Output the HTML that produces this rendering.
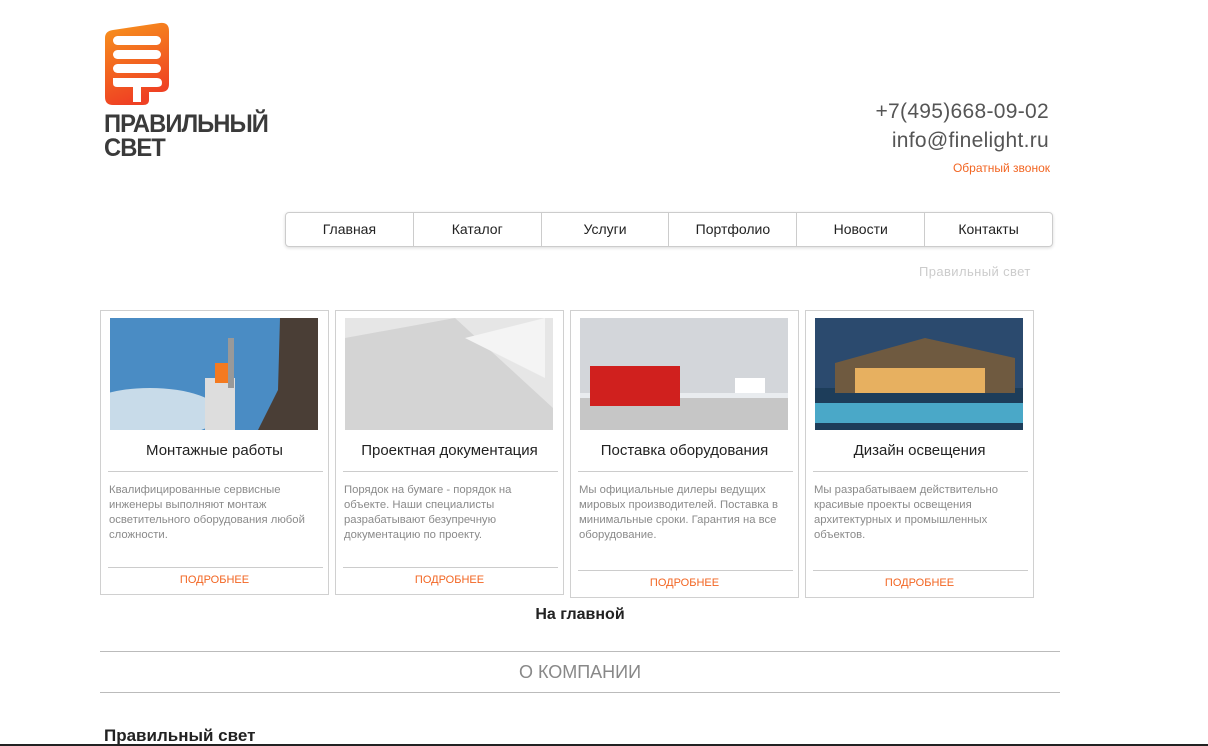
<!DOCTYPE html>
<html><head><meta charset="utf-8"><style>
*{margin:0;padding:0;box-sizing:border-box}
body{width:1208px;height:746px;overflow:hidden;background:#fff;font-family:"Liberation Sans","DejaVu Sans",sans-serif;position:relative}
.a{position:absolute}
.card{position:absolute;top:310px;width:229px;height:285px;border:1px solid #d0d0d0;background:#fff}
.card .img{position:absolute;left:9px;top:7px;width:208px;height:112px}
.card h3{position:absolute;left:0;width:227px;top:131px;text-align:center;font-weight:normal;font-size:15px;color:#222}
.card .l1{position:absolute;left:7px;right:5px;top:160px;border-top:1px solid #ccc}
.card p{position:absolute;left:8px;right:14px;top:172px;font-size:11.3px;line-height:15px;color:#8a8a8a}
.card .l2{position:absolute;left:7px;right:5px;top:256px;border-top:1px solid #ccc}
.card .m{position:absolute;left:0;width:227px;top:263px;text-align:center;font-size:11px;color:#f26522}
.nav{position:absolute;left:285px;top:212px;width:768px;height:35px;border:1px solid #ccc;border-radius:4px;box-shadow:0 1px 3px rgba(0,0,0,.15);display:flex}
.nav div{flex:1;text-align:center;line-height:33px;font-size:14px;color:#222;border-right:1px solid #ccc}
.nav div:last-child{border-right:none}
</style></head><body>
<svg class="a" style="left:105px;top:22px" width="66" height="84" viewBox="0 0 66 84">
<defs><linearGradient id="g" x1="0" y1="0" x2="0.3" y2="1"><stop offset="0" stop-color="#f7941d"/><stop offset="1" stop-color="#ef4123"/></linearGradient></defs>
<path d="M8 8 L55 1 Q64 0 64 9 L64 62 Q64 70 56 70 L44 70 L44 78 Q44 83 38 83 L8 83 Q0 83 0 75 L0 16 Q0 9 8 8Z" fill="url(#g)"/>
<g fill="#fff"><rect x="8" y="14" width="48" height="9" rx="4.5"/><rect x="8" y="28" width="48" height="9" rx="4.5"/><rect x="8" y="42" width="48" height="9" rx="4.5"/><path d="M8 56 H52 Q57 56 57 61 Q57 65 52 65 H36 V80 H28 V65 H12 Q8 65 8 61 Z"/></g>
</svg>
<div class="a" style="left:104px;top:112px;font-size:25px;font-weight:bold;color:#3a3a3a;line-height:24px;letter-spacing:-1px;transform:scaleX(0.95);transform-origin:left">ПРАВИЛЬНЫЙ<br>СВЕТ</div>
<div class="a" style="right:159px;top:97px;font-size:21px;color:#555;text-align:right;line-height:29px;letter-spacing:0.3px">+7(495)668-09-02<br>info@finelight.ru</div>
<div class="a" style="right:158px;top:161px;font-size:12px;color:#f26522">Обратный звонок</div>
<div class="nav"><div>Главная</div><div>Каталог</div><div>Услуги</div><div>Портфолио</div><div>Новости</div><div>Контакты</div></div>
<div class="a" style="left:919px;top:264px;font-size:13px;color:#ccc;letter-spacing:0.4px">Правильный свет</div>

<div class="card" style="left:100px"><svg class="img" viewBox="0 0 208 112"><rect width="208" height="112" fill="#4a8cc4"/><ellipse cx="40" cy="95" rx="70" ry="25" fill="#c8dbe9"/><path d="M170 0h38v112h-60l20-40z" fill="#4a3e36"/><rect x="95" y="60" width="30" height="52" fill="#ddd"/><rect x="105" y="45" width="16" height="20" fill="#f47a20"/><rect x="118" y="20" width="6" height="50" fill="#999"/></svg><h3>Монтажные работы</h3><div class="l1"></div><p>Квалифицированные сервисные инженеры выполняют монтаж осветительного оборудования любой сложности.</p><div class="l2"></div><div class="m">ПОДРОБНЕЕ</div></div>
<div class="card" style="left:335px"><svg class="img" viewBox="0 0 208 112"><rect width="208" height="112" fill="#e6e6e6"/><path d="M0 20L110 0L208 90V112H0Z" fill="#d4d4d4"/><path d="M120 20L200 0V60Z" fill="#f4f4f4"/></svg><h3>Проектная документация</h3><div class="l1"></div><p>Порядок на бумаге - порядок на объекте. Наши специалисты разрабатывают безупречную документацию по проекту.</p><div class="l2"></div><div class="m">ПОДРОБНЕЕ</div></div>
<div class="card" style="left:570px;height:288px"><svg class="img" viewBox="0 0 208 112"><rect width="208" height="112" fill="#e9ecef"/><rect y="0" width="208" height="75" fill="#d3d6da"/><rect y="80" width="208" height="32" fill="#c6c6c6"/><rect x="10" y="48" width="90" height="40" fill="#d0201e"/><rect x="155" y="60" width="30" height="15" fill="#fff"/></svg><h3>Поставка оборудования</h3><div class="l1"></div><p style="right:6px">Мы официальные дилеры ведущих мировых производителей. Поставка в минимальные сроки. Гарантия на все оборудование.</p><div class="l2" style="top:259px"></div><div class="m" style="top:266px">ПОДРОБНЕЕ</div></div>
<div class="card" style="left:805px;height:288px"><svg class="img" viewBox="0 0 208 112"><rect width="208" height="112" fill="#2b4a6e"/><rect y="70" width="208" height="42" fill="#1d3d5a"/><path d="M20 45L110 20L200 40V75H20Z" fill="#6f5a40"/><rect x="40" y="50" width="130" height="25" fill="#e7b060"/><rect x="0" y="85" width="208" height="20" fill="#4aa8c8"/></svg><h3>Дизайн освещения</h3><div class="l1"></div><p>Мы разрабатываем действительно красивые проекты освещения архитектурных и промышленных объектов.</p><div class="l2" style="top:259px"></div><div class="m" style="top:266px">ПОДРОБНЕЕ</div></div>

<div class="a" style="left:100px;width:960px;top:606px;text-align:center;font-size:16px;font-weight:bold;color:#222">На главной</div>
<div class="a" style="left:100px;width:960px;top:651px;border-top:1px solid #bbb"></div>
<div class="a" style="left:100px;width:960px;top:662px;text-align:center;font-size:18px;color:#888">О КОМПАНИИ</div>
<div class="a" style="left:100px;width:960px;top:692px;border-top:1px solid #bbb"></div>
<div class="a" style="left:104px;top:726px;font-size:17px;font-weight:bold;color:#222">Правильный свет</div>
<div class="a" style="left:0;width:1208px;top:744px;height:2px;background:#222"></div>
</body></html>
